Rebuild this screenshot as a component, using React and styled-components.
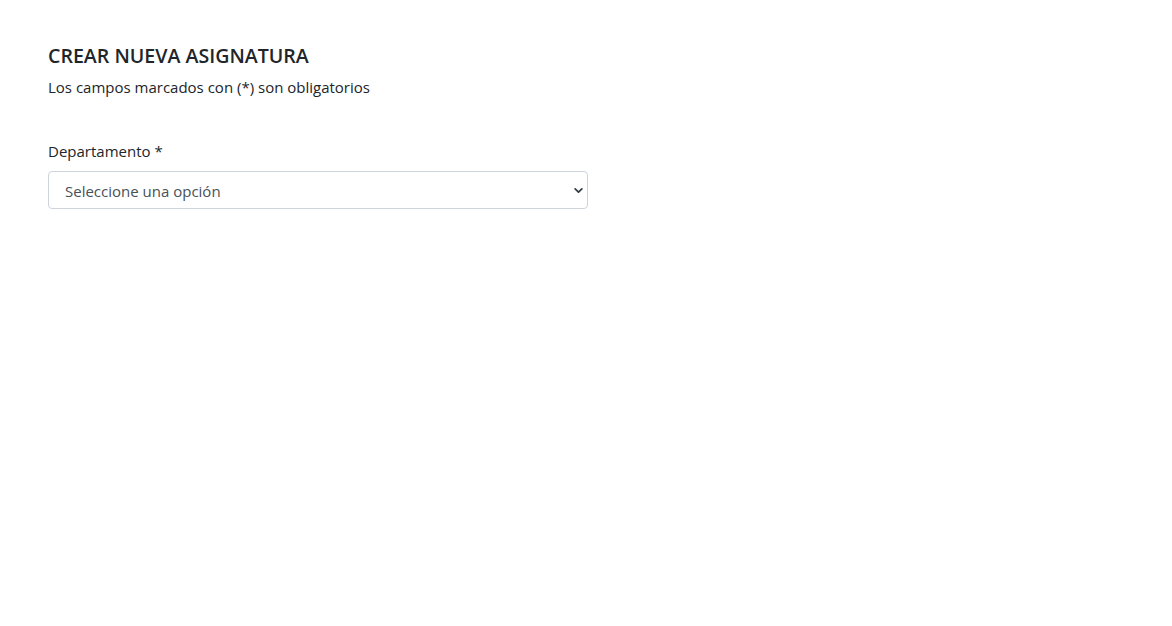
import React from "react";
import styled, { createGlobalStyle } from "styled-components";

const Global = createGlobalStyle`
  html, body { margin: 0; padding: 0; background: #fff; }
  body { font-family: "Open Sans", "Noto Sans", sans-serif; color: #212529; }
  * { box-sizing: border-box; }
`;

const Page = styled.div`
  padding: 44px 48px;
  display: flex;
  flex-direction: column;
`;

const Title = styled.h4`
  margin: 0;
  font-size: 19.6px;
  font-weight: 600;
  line-height: 24px;
  color: #212529;
`;

const Subtitle = styled.p`
  margin: 8px 0 0;
  font-size: 15px;
  line-height: 22px;
`;

const Field = styled.div`
  margin-top: 42px;
  width: 540px;
  display: flex;
  flex-direction: column;
  gap: 9px;
`;

const Label = styled.label`
  font-size: 15px;
  line-height: 22px;
`;

const Select = styled.select`
  appearance: none;
  width: 100%;
  height: 38px;
  padding: 1px 36px 0 16px;
  font-family: inherit;
  font-size: 15px;
  color: #495057;
  background-color: #fff;
  background-image: url("data:image/svg+xml,%3csvg xmlns='http://www.w3.org/2000/svg' viewBox='0 0 16 16'%3e%3cpath fill='none' stroke='%23343a40' stroke-linecap='round' stroke-linejoin='round' stroke-width='3' d='M2 5l6 6 6-6'/%3e%3c/svg%3e");
  background-repeat: no-repeat;
  background-position: right 4px center;
  background-size: 9px 9px;
  border: 1px solid #ced4da;
  border-radius: 4px;
`;

export default function App() {
  return (
    <>
      <Global />
      <Page>
        <Title>CREAR NUEVA ASIGNATURA</Title>
        <Subtitle>Los campos marcados con (*) son obligatorios</Subtitle>
        <Field>
          <Label>Departamento *</Label>
          <Select defaultValue="">
            <option value="">Seleccione una opción</option>
          </Select>
        </Field>
      </Page>
    </>
  );
}
